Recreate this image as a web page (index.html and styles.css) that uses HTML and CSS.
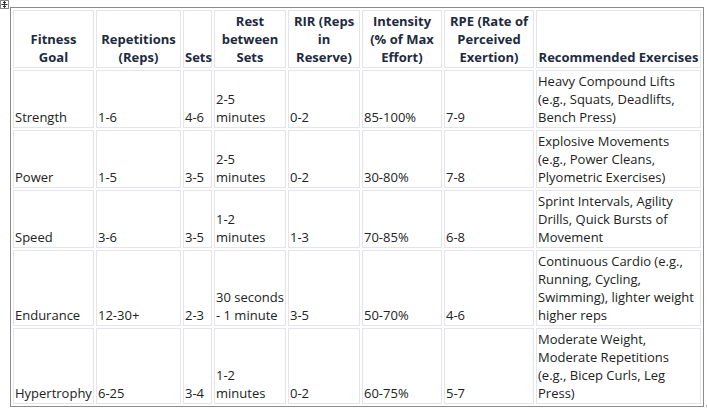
FILE: index.html
```html
<!DOCTYPE html>
<html>
<head>
<meta charset="utf-8">
<link rel="stylesheet" href="styles.css">
</head>
<body>
<span class="move-handle"><svg width="9" height="9" viewBox="0 0 9 9"><rect x="0.5" y="0.5" width="8" height="8" fill="#fff" stroke="#888"/><path d="M4.5 1.5v6M1.5 4.5h6M3 6l1.5 1.5L6 6M3 3l1.5-1.5L6 3" fill="none" stroke="#333" stroke-width="1"/></svg></span>
<table class="plan">
  <colgroup>
    <col class="c1"><col class="c2"><col class="c3"><col class="c4"><col class="c5"><col class="c6"><col class="c7"><col class="c8">
  </colgroup>
  <thead>
    <tr>
      <th>Fitness Goal</th>
      <th>Repetitions (Reps)</th>
      <th>Sets</th>
      <th>Rest between Sets</th>
      <th>RIR (Reps in Reserve)</th>
      <th>Intensity (% of Max Effort)</th>
      <th>RPE (Rate of Perceived Exertion)</th>
      <th>Recommended Exercises</th>
    </tr>
  </thead>
  <tbody>
    <tr>
      <td>Strength</td><td>1-6</td><td>4-6</td><td>2-5 minutes</td><td>0-2</td><td>85-100%</td><td>7-9</td><td>Heavy Compound Lifts (e.g., Squats, Deadlifts, Bench Press)</td>
    </tr>
    <tr>
      <td>Power</td><td>1-5</td><td>3-5</td><td>2-5 minutes</td><td>0-2</td><td>30-80%</td><td>7-8</td><td>Explosive Movements (e.g., Power Cleans, Plyometric Exercises)</td>
    </tr>
    <tr>
      <td>Speed</td><td>3-6</td><td>3-5</td><td>1-2 minutes</td><td>1-3</td><td>70-85%</td><td>6-8</td><td>Sprint Intervals, Agility Drills, Quick Bursts of Movement</td>
    </tr>
    <tr>
      <td>Endurance</td><td>12-30+</td><td>2-3</td><td>30 seconds - 1 minute</td><td>3-5</td><td>50-70%</td><td>4-6</td><td>Continuous Cardio (e.g., Running, Cycling, Swimming), lighter weight higher reps</td>
    </tr>
    <tr>
      <td>Hypertrophy</td><td>6-25</td><td>3-4</td><td>1-2 minutes</td><td>0-2</td><td>60-75%</td><td>5-7</td><td>Moderate Weight, Moderate Repetitions (e.g., Bicep Curls, Leg Press)</td>
    </tr>
  </tbody>
</table>
<span class="resize-handle"></span>
</body>
</html>
```
FILE: styles.css
```css
html, body {
  margin: 0;
  padding: 0;
  background: #fff;
}
body {
  position: relative;
  font-family: "Open Sans", "Noto Sans", sans-serif;
  font-size: 13px;
  line-height: 18px;
  color: #222;
}
.move-handle {
  position: absolute;
  left: 0;
  top: 0;
  width: 9px;
  height: 9px;
  line-height: 0;
}
.plan {
  margin: 7px 0 0 10px;
  table-layout: fixed;
  width: 694px;
  border-collapse: separate;
  border-spacing: 2px;
  border: 1px solid #8c8c8c;
}
.c1 { width: 81px; }
.c2 { width: 85px; }
.c3 { width: 29px; }
.c4 { width: 72px; }
.c5 { width: 72px; }
.c6 { width: 80px; }
.c7 { width: 90px; }
.c8 { width: 165px; }
.plan th, .plan td {
  border: 1px solid #e4e4ec;
  padding: 1px;
  vertical-align: bottom;
}
.plan th {
  font-weight: 700;
  text-align: center;
  color: #1e2a40;
}
.plan td {
  text-align: left;
}
.resize-handle {
  position: absolute;
  left: 703px;
  top: 405px;
  width: 3px;
  height: 3px;
  border-right: 1px solid #aaa;
  border-bottom: 1px solid #aaa;
}
```
